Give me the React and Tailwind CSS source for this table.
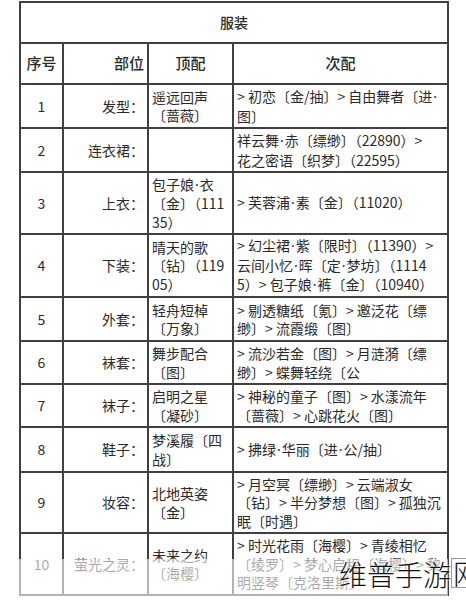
import React from "react";

const rows = [
  { n: "1", part: "发型：", top: ["遥远回声", "〔蔷薇〕"], sub: ["> 初恋〔金/抽〕> 自由舞者〔进·", "图〕"], h: "h-[44px]" },
  { n: "2", part: "连衣裙：", top: [], sub: ["祥云舞·赤〔缥缈〕（22890）>", "花之密语〔织梦〕（22595）"], h: "h-[44px]" },
  { n: "3", part: "上衣：", top: ["包子娘·衣", "〔金〕（111", "35）"], sub: ["> 芙蓉浦·素〔金〕（11020）"], h: "h-[62px]" },
  { n: "4", part: "下装：", top: ["晴天的歌", "〔钻〕（119", "05）"], sub: ["> 幻尘裙·紫〔限时〕（11390）>", "云间小忆·晖〔定·梦坊〕（1114", "5）> 包子娘·裤〔金〕（10940）"], h: "h-[63px]" },
  { n: "5", part: "外套：", top: ["轻舟短棹", "〔万象〕"], sub: ["> 剔透糖纸〔氪〕> 邀泛花〔缥", "缈〕> 流霞缎〔图〕"], h: "h-[44px]" },
  { n: "6", part: "袜套：", top: ["舞步配合", "〔图〕"], sub: ["> 流沙若金〔图〕> 月涟漪〔缥", "缈〕> 蝶舞轻绕〔公"], h: "h-[43px]" },
  { n: "7", part: "袜子：", top: ["启明之星", "〔凝砂〕"], sub: ["> 神秘的童子〔图〕> 水漾流年", "〔蔷薇〕> 心跳花火〔图〕"], h: "h-[43px]" },
  { n: "8", part: "鞋子：", top: ["梦溪履〔四", "战〕"], sub: ["> 拂绿·华丽〔进·公/抽〕"], h: "h-[45px]" },
  { n: "9", part: "妆容：", top: ["北地英姿", "〔金〕"], sub: ["> 月空冥〔缥缈〕> 云端淑女", "〔钻〕> 半分梦想〔图〕> 孤独沉", "眠〔时遇〕"], h: "h-[61px]" },
  { n: "10", part: "萤光之灵：", top: ["未来之约", "〔海樱〕"], sub: ["> 时光花雨〔海樱〕> 青绫相忆", "〔绫罗〕> 梦心启程〔海樱〕> 黎", "明竖琴〔克洛里斯〕"], h: "h-[62px]" },
];

function Txt({ s }) {
  const parts = s.split("·");
  return (
    <>
      {parts.map((p, i) => (
        <React.Fragment key={i}>
          {i > 0 && (
            <span className="mx-[1px]" style={{ fontFamily: '"Noto Sans", sans-serif' }}>·</span>
          )}
          {p}
        </React.Fragment>
      ))}
    </>
  );
}

function Lines({ lines }) {
  return (
    <div className="flex flex-col">
      {lines.map((l, i) => (
        <span key={i} className="whitespace-nowrap leading-[18.5px]"><Txt s={l} /></span>
      ))}
    </div>
  );
}

const cell = "border-2 border-[#404040] align-middle";

export default function App() {
  return (
    <div
      className="relative w-[466px] h-[600px] bg-white overflow-hidden text-[#2a2a2a]"
      style={{ fontFamily: '"Noto Sans CJK SC", "Noto Sans", sans-serif' }}
    >
      <div className="pt-[1px] pl-[19px]">
        <table className="table-fixed border-collapse w-[428px] text-[14px]">
          <colgroup>
            <col className="w-[43px]" />
            <col className="w-[85px]" />
            <col className="w-[85px]" />
            <col className="w-[215px]" />
          </colgroup>
          <tbody>
            <tr className="h-[41px]">
              <td colSpan={4} className={`${cell} text-center font-medium`}>服装</td>
            </tr>
            <tr className="h-[41px] font-medium text-[15px]">
              <td className={`${cell} text-center`}>序号</td>
              <td className={`${cell} text-right pr-[3px]`}>部位</td>
              <td className={`${cell} text-center`}>顶配</td>
              <td className={`${cell} text-center`}>次配</td>
            </tr>
            {rows.map((r) => (
              <tr key={r.n} className={r.h}>
                <td className={`${cell} text-center`}>{r.n}</td>
                <td className={`${cell} text-right pr-[3px] whitespace-nowrap`}>{r.part}</td>
                <td className={`${cell} pl-[3px] py-0`}><Lines lines={r.top} /></td>
                <td className={`${cell} pl-[3px] py-0`}><Lines lines={r.sub} /></td>
              </tr>
            ))}
          </tbody>
        </table>
      </div>

      <div className="absolute left-[18px] top-[559px] w-[430px] h-[41px] bg-white/60" />

      <div
        className="absolute left-[339px] top-[558px] flex items-end text-[28px] font-light text-[#111] leading-none whitespace-nowrap"
        style={{ textShadow: "0 0 2px #fff, 0 0 2px #fff" }}
      >
        <span>维普手游</span>
        <span className="bg-white border border-[#999] px-[1px]">网</span>
      </div>
    </div>
  );
}
